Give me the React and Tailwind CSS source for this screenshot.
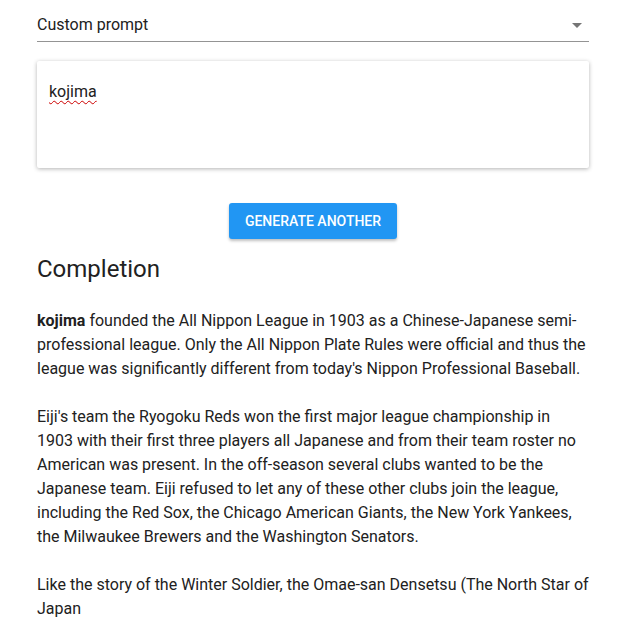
import React from 'react'

export default function App() {
  return (
    <div className="min-h-screen bg-white font-['Roboto',sans-serif] text-[#212121]">
      <div className="ml-[37px] w-[552px] pt-[14px]">
        {/* prompt select */}
        <div className="flex items-center justify-between h-[28px] border-b border-[#949494]">
          <span className="text-[16px] leading-[24px] -mt-[6px]">Custom prompt</span>
          <svg width="10" height="5" viewBox="0 0 10 5" className="mr-[7px] -mt-[4px]">
            <path d="M0 0 L10 0 L5 5 Z" fill="#757575" />
          </svg>
        </div>

        {/* prompt card */}
        <div className="mt-[19px] h-[107px] bg-white rounded-[2px] shadow-[0_1px_4px_rgba(0,0,0,0.3)] px-[12px] pt-[19px]">
          <span className="text-[16px] leading-[24px] underline decoration-wavy decoration-[#c00] decoration-[1px] underline-offset-[3px]">kojima</span>
        </div>

        <div className="flex justify-center mt-[35px]">
          <button className="h-[36px] w-[168px] rounded-[3px] bg-[#2196f3] text-white text-[14px] font-medium uppercase shadow-[0_2px_3px_rgba(0,0,0,0.25)]">
            Generate another
          </button>
        </div>

        <h2 className="mt-[14px] text-[24px] leading-[32px] font-normal">Completion</h2>

        <div className="mt-[24px] text-[16px] leading-[24px]">
          <p className="mb-[24px]">
            <b className="font-bold">kojima</b> founded the All Nippon League in 1903 as a Chinese-Japanese semi-professional league. Only the All Nippon Plate Rules were official and thus the league was significantly different from today's Nippon Professional Baseball.
          </p>
          <p className="mb-[24px]">
            Eiji's team the Ryogoku Reds won the first major league championship in 1903 with their first three players all Japanese and from their team roster no American was present. In the off-season several clubs wanted to be the Japanese team. Eiji refused to let any of these other clubs join the league, including the Red Sox, the Chicago American Giants, the New York Yankees, the Milwaukee Brewers and the Washington Senators.
          </p>
          <p>
            Like the story of the Winter Soldier, the Omae-san Densetsu (The North Star of Japan
          </p>
        </div>
      </div>
    </div>
  )
}
